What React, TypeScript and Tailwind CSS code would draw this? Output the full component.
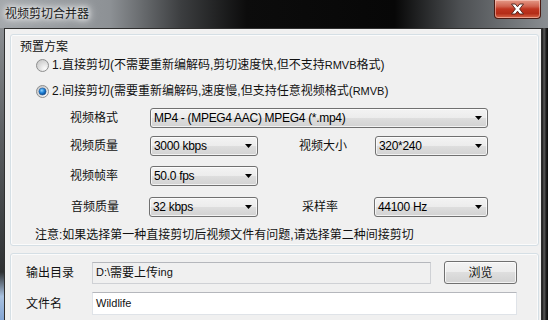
import React from "react"

const font = "font-['Liberation_Sans','Noto_Sans_CJK_SC',sans-serif]"

function Radio({ checked }: { checked?: boolean }) {
  return (
    <svg width="13" height="13" viewBox="0 0 13 13" className="shrink-0">
      <defs>
        <radialGradient id={checked ? "rin1" : "rin0"} cx="0.7" cy="0.75" r="0.8">
          <stop offset="0" stopColor="#fbfbfb" />
          <stop offset="1" stopColor="#c9c9c9" />
        </radialGradient>
        <radialGradient id="dot" cx="0.4" cy="0.35" r="0.7">
          <stop offset="0" stopColor="#8fd3ff" />
          <stop offset="0.5" stopColor="#1b7fd6" />
          <stop offset="1" stopColor="#0a3d7a" />
        </radialGradient>
      </defs>
      <circle cx="6.5" cy="6.5" r="6" fill={checked ? "url(#rin1)" : "url(#rin0)"} stroke="#8e8f8f" />
      {checked && <circle cx="6.5" cy="6.5" r="3.6" fill="url(#dot)" stroke="#2a5d98" strokeWidth="0.6" />}
    </svg>
  )
}

function Combo({ value, w }: { value: string; w: string }) {
  return (
    <div
      className={`${w} h-[20px] flex items-center justify-between pl-[3px] pr-[5px] rounded-[3px] border border-[#707070] bg-[linear-gradient(#f3f3f3_0%,#ececec_50%,#dedede_50%,#d2d2d2_100%)] shadow-[inset_0_0_0_1px_rgba(255,255,255,0.7)]`}
    >
      <span className="text-[12px] tracking-[-0.3px] text-black font-['Liberation_Sans',sans-serif] whitespace-nowrap">{value}</span>
      <svg width="7" height="4" viewBox="0 0 7 4">
        <polygon points="0,0 7,0 3.5,4" fill="#000" />
      </svg>
    </div>
  )
}

export default function App() {
  return (
    <div className={`w-[548px] h-[320px] overflow-hidden flex flex-col ${font} text-[12px] text-[#111]`}>
      {/* title bar */}
      <div className="h-[28px] shrink-0 flex items-start justify-between bg-[linear-gradient(90deg,#a4a8ac_0%,#8d9195_20%,#3c3e40_33%,#0c0c0c_45%,#070707_72%,#4d5053_84%,#8a8e92_100%)]">
        <div className="ml-[5px] mt-[5px] text-[12px] leading-[18px] text-[#1a1a1a] [text-shadow:0_0_5px_#fff,0_0_9px_#fff,0_0_12px_#fff]">
          视频剪切合并器
        </div>
        <div className="mr-[7px] w-[47px] h-[19px] flex items-center justify-center rounded-b-[4px] border border-t-0 border-[#4a1a12] bg-[linear-gradient(#e59a88_0%,#d0634f_35%,#bf3520_50%,#b42d18_75%,#d8684a_100%)] shadow-[inset_0_0_0_1px_rgba(255,220,210,0.5)]">
          <svg width="15" height="12" viewBox="0 0 15 12">
            <path
              d="M1.5 1 L5.3 1 L7.5 3.8 L9.7 1 L13.5 1 L9.6 6 L13.5 11 L9.7 11 L7.5 8.2 L5.3 11 L1.5 11 L5.4 6 Z"
              fill="#fff"
              stroke="#4a2018"
              strokeWidth="0.9"
              strokeLinejoin="round"
            />
          </svg>
        </div>
      </div>

      <div className="flex flex-1">
        {/* left frame */}
        <div className="w-[4px] shrink-0 bg-[linear-gradient(#8b8e91_0%,#5b5e61_35%,#2e3032_80%,#a9c1e0_88%,#6f95cc_100%)]" />

        {/* client area */}
        <div className="w-[538px] shrink-0 border-l border-t border-r border-[#2f2f2f] bg-[#f0f0f0]">
          {/* preset group */}
          <div className="ml-[5px] mt-[5px] w-[529px] h-[212px] rounded-[3px] border border-[#d5dfe5] shadow-[inset_0_0_0_1px_#fbfbfb] flex flex-col">
            <div className="mt-[4px] h-[16px] pl-[9px] flex items-center">预置方案</div>
            <div className="h-[20px] pl-[25px] flex items-center gap-[3px]">
              <Radio />
              <span>1.直接剪切(不需要重新编解码,剪切速度快,但不支持<span className="text-[11px]">RMVB</span>格式)</span>
            </div>
            <div className="mt-[6px] h-[20px] pl-[25px] flex items-center gap-[3px]">
              <Radio checked />
              <span>2.间接剪切(需要重新编解码,速度慢,但支持任意视频格式(<span className="text-[11px]">RMVB</span>)</span>
            </div>

            <div className="mt-[7px] pl-[59px] flex items-center">
              <span className="w-[80px]">视频格式</span>
              <Combo value="MP4 - (MPEG4 AAC) MPEG4 (*.mp4)" w="w-[338px]" />
            </div>
            <div className="mt-[8px] pl-[59px] flex items-center">
              <span className="w-[80px]">视频质量</span>
              <Combo value="3000 kbps" w="w-[108px]" />
              <span className="ml-[41px] w-[76px]">视频大小</span>
              <Combo value="320*240" w="w-[113px]" />
            </div>
            <div className="mt-[10px] pl-[59px] flex items-center">
              <span className="w-[80px]">视频帧率</span>
              <Combo value="50.0 fps" w="w-[108px]" />
            </div>
            <div className="mt-[11px] pl-[60px] flex items-center">
              <span className="w-[78px]">音频质量</span>
              <Combo value="32 kbps" w="w-[109px]" />
              <span className="ml-[44px] w-[72px]">采样率</span>
              <Combo value="44100 Hz" w="w-[114px]" />
            </div>
            <div className="mt-[10px] h-[16px] pl-[24px] flex items-center">
              注意:如果选择第一种直接剪切后视频文件有问题,请选择第二种间接剪切
            </div>
          </div>

          {/* output group */}
          <div className="ml-[5px] mt-[7px] w-[529px] h-[80px] rounded-[3px] border border-[#d5dfe5] shadow-[inset_0_0_0_1px_#fbfbfb] flex flex-col">
            <div className="mt-[7px] pl-[15px] flex items-center">
              <span className="w-[66px]">输出目录</span>
              <div className="w-[339px] h-[22px] flex items-center pl-[3px] border border-[#cfd1d5] border-t-[#b5b7bc] bg-[#f0f0f0]">
                <span className="text-[11px]">D:\</span>需要上传<span className="text-[11px]">ing</span>
              </div>
              <div className="ml-[13px] w-[73px] h-[23px] flex items-center justify-center rounded-[3px] border border-[#707070] bg-[linear-gradient(#f3f3f3_0%,#ececec_50%,#dedede_50%,#d2d2d2_100%)] shadow-[inset_0_0_0_1px_rgba(255,255,255,0.7)]">
                浏览
              </div>
            </div>
            <div className="mt-[8px] pl-[15px] flex items-center">
              <span className="w-[66px]">文件名</span>
              <div className="w-[425px] h-[23px] flex items-center pl-[3px] border border-[#dfe3e8] border-t-[#b5b7bc] bg-white">
                <span className="text-[11px]">Wildlife</span>
              </div>
            </div>
          </div>
        </div>

        {/* right frame */}
        <div className="w-[6px] shrink-0 bg-[linear-gradient(90deg,#1a1a1a_0%,#5a5a5a_35%,#202020_70%,#0d0d0d_100%)]" />
      </div>
    </div>
  )
}
